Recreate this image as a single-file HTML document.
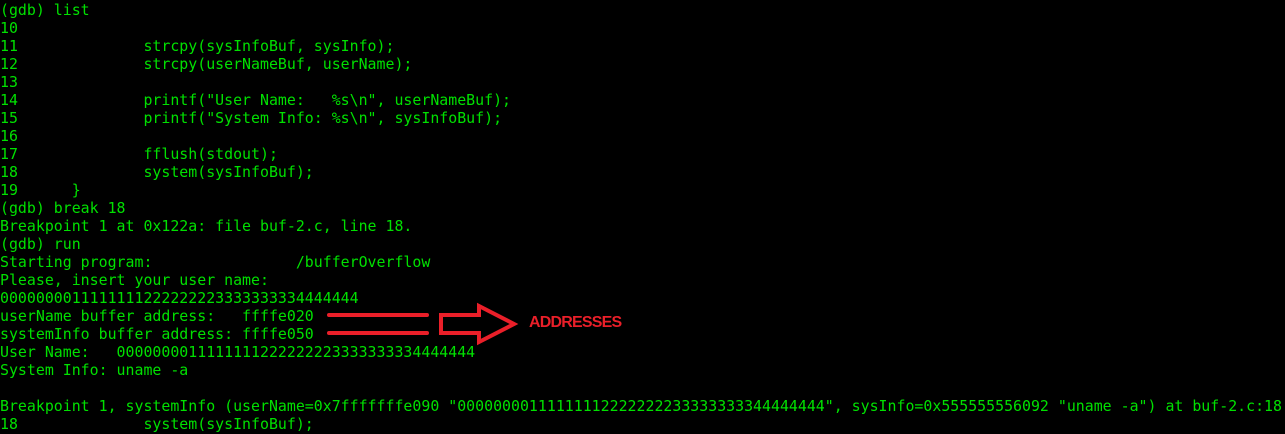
<!DOCTYPE html>
<html><head><meta charset="utf-8"><style>
html,body{margin:0;padding:0;background:#000;width:1285px;height:434px;overflow:hidden}
pre{margin:0;position:absolute;left:0;top:1px;font-family:"DejaVu Sans Mono","Liberation Mono",monospace;font-size:14.9px;line-height:18px;color:#00e000;white-space:pre}
.lbl{position:absolute;left:529px;top:314px;font-family:"Liberation Sans",sans-serif;font-weight:bold;font-size:16px;color:#ea1f29;letter-spacing:-0.8px}
</style></head><body>
<pre>(gdb) list
10
11              strcpy(sysInfoBuf, sysInfo);
12              strcpy(userNameBuf, userName);
13
14              printf("User Name:   %s\n", userNameBuf);
15              printf("System Info: %s\n", sysInfoBuf);
16
17              fflush(stdout);
18              system(sysInfoBuf);
19      }
(gdb) break 18
Breakpoint 1 at 0x122a: file buf-2.c, line 18.
(gdb) run
Starting program:                /bufferOverflow
Please, insert your user name:
0000000011111111222222223333333334444444
userName buffer address:   ffffe020
systemInfo buffer address: ffffe050
User Name:   0000000011111111222222223333333334444444
System Info: uname -a

Breakpoint 1, systemInfo (userName=0x7fffffffe090 "00000000111111112222222233333333344444444", sysInfo=0x555555556092 "uname -a") at buf-2.c:18
18              system(sysInfoBuf);</pre>
<svg width="1285" height="434" style="position:absolute;left:0;top:0">
<g stroke="#ea1f29" stroke-width="4" stroke-linecap="round" fill="none">
<line x1="329" y1="315" x2="427" y2="315"/>
<line x1="329" y1="333" x2="427" y2="333"/>
<path d="M441 315 L479 315 L479 306 L514 324 L479 342 L479 333 L441 333 Z" stroke-linecap="butt" stroke-linejoin="miter"/>
</g>
</svg>
<div class="lbl">ADDRESSES</div>
</body></html>
